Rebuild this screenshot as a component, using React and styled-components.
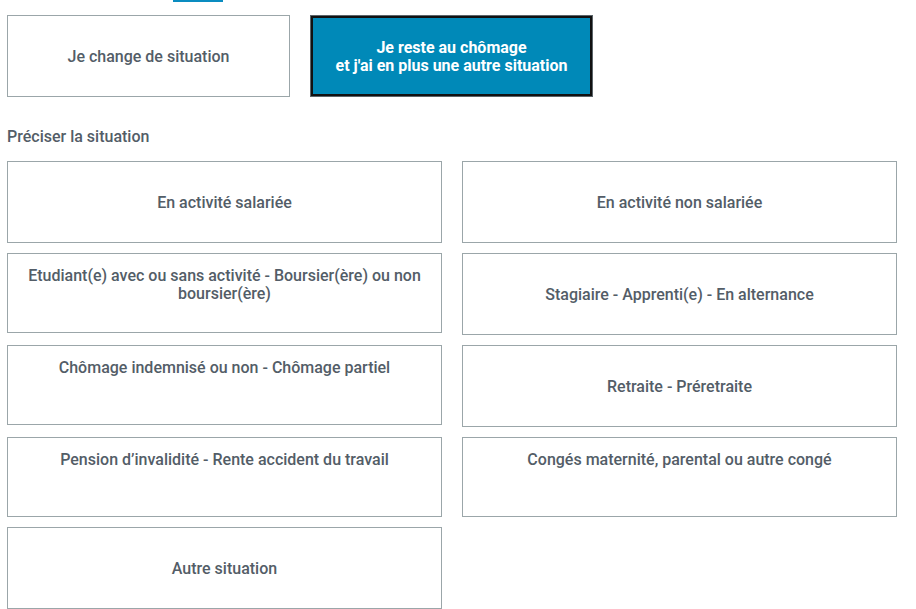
import React from "react";
import styled, { createGlobalStyle } from "styled-components";

const Global = createGlobalStyle`
  html, body { margin: 0; padding: 0; background: #fff; }
  body { font-family: Roboto, "Noto Sans", "Liberation Sans", sans-serif; }
  * { box-sizing: border-box; }
`;

const Page = styled.div`
  width: 916px;
  height: 609px;
  overflow: hidden;
  padding: 0 7px;
`;

const TabMark = styled.div`
  width: 50px;
  height: 2px;
  margin-left: 166px;
  background: #0a8cc0;
`;

const ChoiceRow = styled.div`
  display: flex;
  gap: 20px;
  margin-top: 13px;
`;

const ChoiceButton = styled.button`
  width: 283px;
  height: 82px;
  display: flex;
  align-items: center;
  justify-content: center;
  text-align: center;
  font-family: inherit;
  font-size: 16px;
  line-height: 18px;
  font-weight: ${(p) => (p.$active ? 700 : 500)};
  cursor: pointer;
  background: ${(p) => (p.$active ? "#0089b8" : "#fff")};
  color: ${(p) => (p.$active ? "#fff" : "#535d67")};
  border: ${(p) => (p.$active ? "2px solid #111" : "1px solid #9ba6a9")};
  box-shadow: ${(p) => (p.$active ? "0 0 0 1px #5b6469" : "none")};
  ${(p) => (p.$active ? "margin: 1px 0 0 1px; width: 281px; height: 80px;" : "")}
  padding: 2px 10px 0;
`;

const Heading = styled.h3`
  margin: 31px 0 15px;
  font-size: 16px;
  line-height: 18px;
  font-weight: 500;
  color: #535d67;
`;

const Grid = styled.div`
  display: grid;
  grid-template-columns: 435px 435px;
  align-items: start;
  column-gap: 20px;
  row-gap: 10px;
`;

const Option = styled.button`
  height: ${(p) => (p.$top ? "80px" : "82px")};
  display: flex;
  justify-content: center;
  align-items: ${(p) => (p.$top ? "flex-start" : "center")};
  padding: ${(p) => (p.$top ? "13px 16px 0" : "2px 16px 0")};
  text-align: center;
  background: #fff;
  border: 1px solid #9ba6a9;
  font-family: inherit;
  font-size: 16px;
  line-height: 18px;
  font-weight: 500;
  color: #535d67;
  cursor: pointer;
`;

const options = [
  { label: "En activité salariée" },
  { label: "En activité non salariée" },
  { label: "Etudiant(e) avec ou sans activité - Boursier(ère) ou non boursier(ère)", top: true },
  { label: "Stagiaire - Apprenti(e) - En alternance" },
  { label: "Chômage indemnisé ou non - Chômage partiel", top: true },
  { label: "Retraite - Préretraite" },
  { label: "Pension d’invalidité - Rente accident du travail", top: true },
  { label: "Congés maternité, parental ou autre congé", top: true },
  { label: "Autre situation" },
];

export default function App() {
  return (
    <>
      <Global />
      <Page>
        <TabMark />
        <ChoiceRow>
          <ChoiceButton>Je change de situation</ChoiceButton>
          <ChoiceButton $active>
            Je reste au chômage
            <br />
            et j'ai en plus une autre situation
          </ChoiceButton>
        </ChoiceRow>
        <Heading>Préciser la situation</Heading>
        <Grid>
          {options.map((o) => (
            <Option key={o.label} $top={o.top}>
              {o.label}
            </Option>
          ))}
        </Grid>
      </Page>
    </>
  );
}
